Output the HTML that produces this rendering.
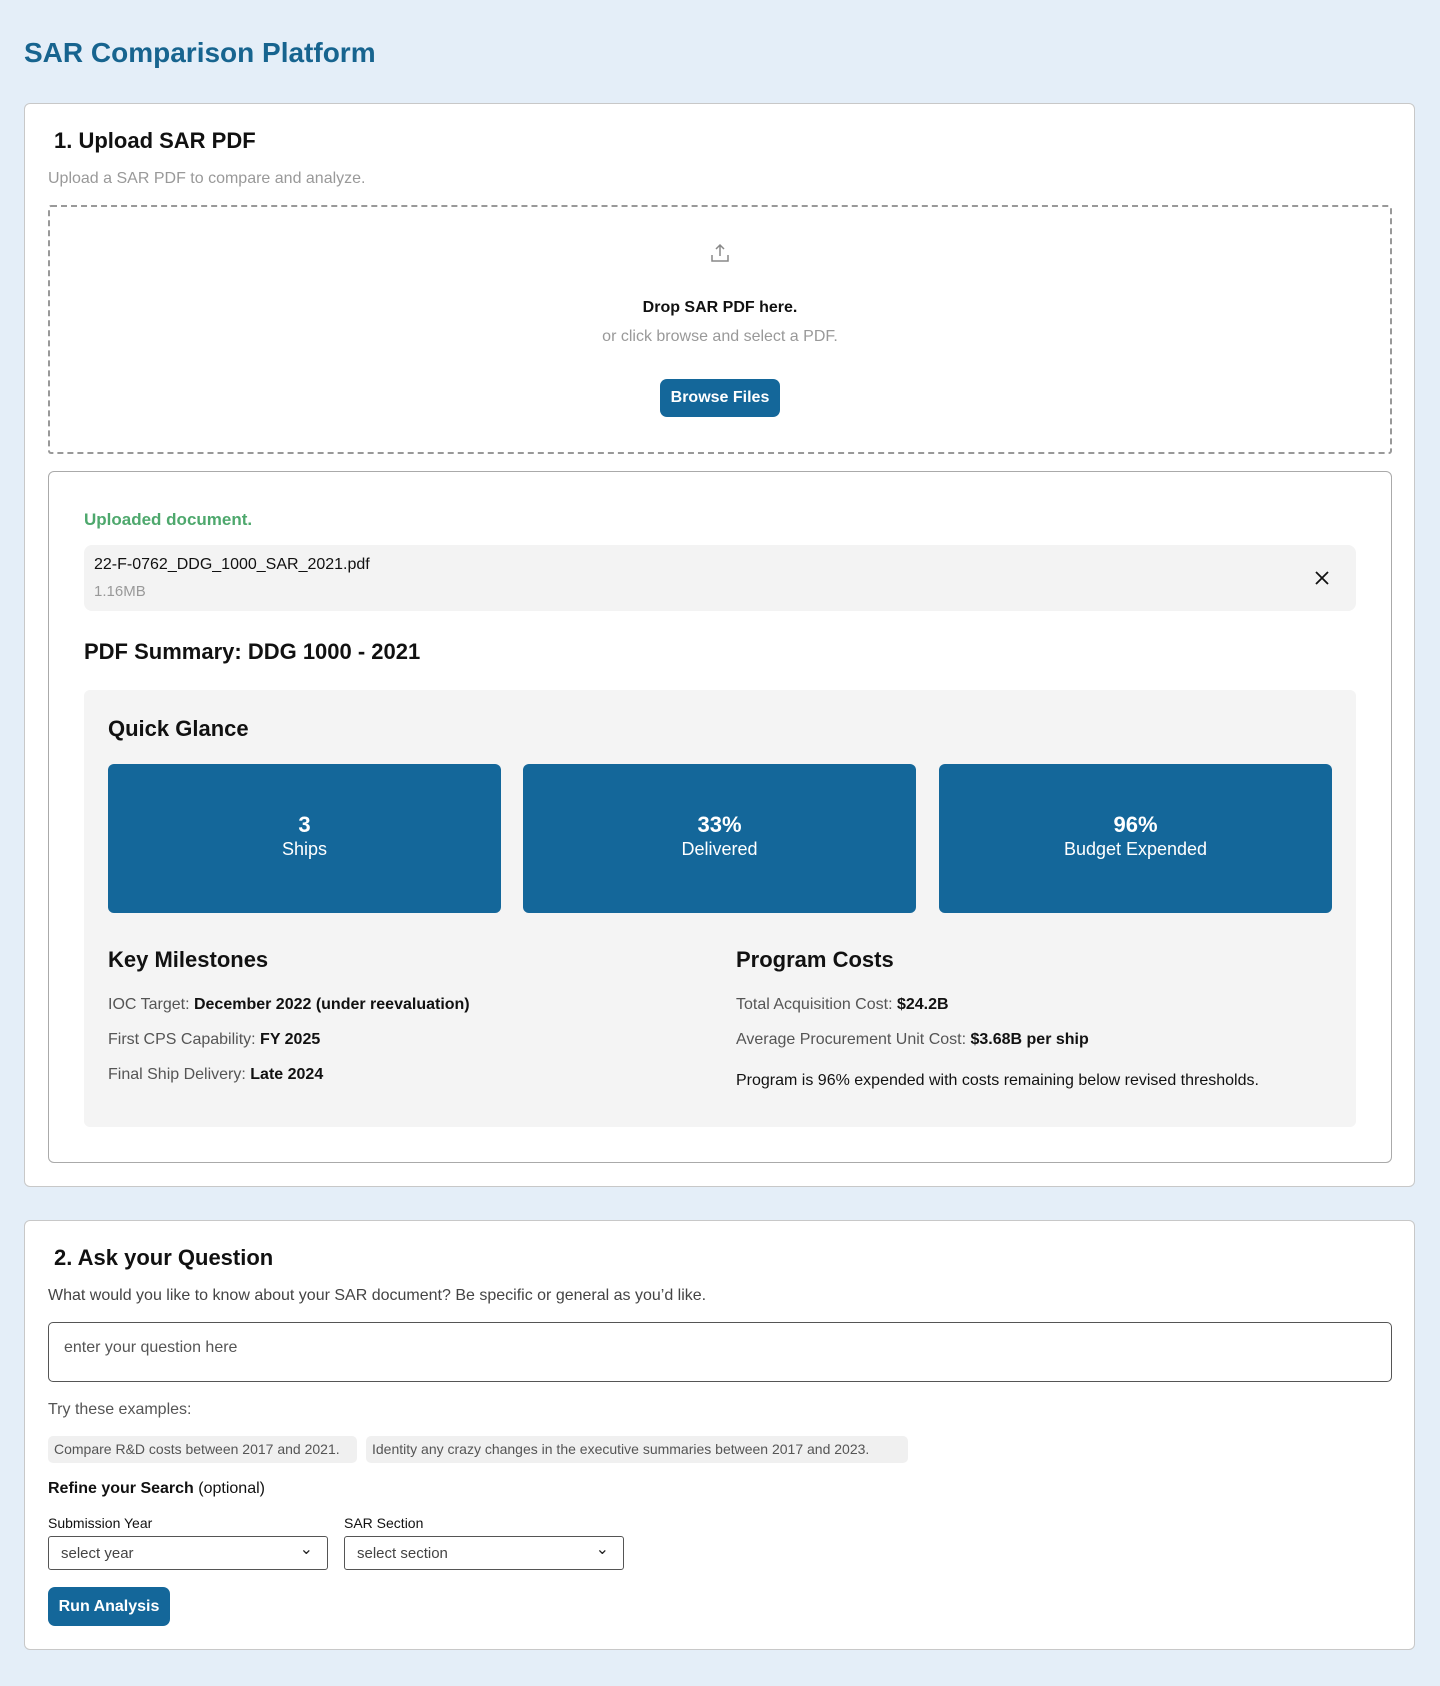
<!DOCTYPE html>
<html><head><meta charset="utf-8"><style>
*{box-sizing:border-box;margin:0;padding:0}
body{width:1440px;height:1686px;background:#e4eef8;font-family:"Liberation Sans",sans-serif;color:#111;position:relative;overflow:hidden}
.a{position:absolute}
h1{position:absolute;left:24px;top:37px;font-size:28px;color:#17648f;font-weight:bold}
.card{position:absolute;background:#fff;border:1px solid #c8c8c8;border-radius:6px}
.h2{position:absolute;font-size:22px;font-weight:bold}
.muted{color:#999}
.btn{position:absolute;background:#14679a;color:#fff;font-weight:bold;font-size:16px;border-radius:7px;display:flex;align-items:center;justify-content:center}
.tile{position:absolute;top:764px;height:149px;width:393px;background:#14679a;color:#fff;border-radius:6px;text-align:center;padding-top:48px;font-size:18px}
.tile b{display:block;font-size:22px;margin-bottom:1px}
.row{position:absolute;font-size:16px;color:#555}
.row b{color:#111}
.chip{position:absolute;top:1436px;height:27px;background:#f0f0f0;border-radius:5px;font-size:14px;color:#555;padding:5px 6px 0}
.sel{position:absolute;top:1536px;height:34px;width:280px;border:1px solid #555;border-radius:3px;font-size:15px;color:#444;padding:8px 12px}
.sel:after{content:"⌄";position:absolute;right:14px;top:2px;font-size:16px;color:#222}
</style></head><body>
<h1>SAR Comparison Platform</h1>

<div class="card" style="left:24px;top:103px;width:1391px;height:1084px"></div>
<div class="h2" style="left:54px;top:128px">1. Upload SAR PDF</div>
<div class="a muted" style="left:48px;top:170px;font-size:16px">Upload a SAR PDF to compare and analyze.</div>
<div class="a" style="left:48px;top:205px;width:1344px;height:249px;border:2px dashed #999;border-radius:3px"></div>
<svg class="a" style="left:709px;top:242px" width="22" height="22" viewBox="0 0 22 22" fill="none" stroke="#888" stroke-width="1.5"><path d="M11 3v11M7 7l4-4 4 4M3 13v6h16v-6"/></svg>
<div class="a" style="left:0;width:1440px;text-align:center;top:299px;font-size:16px;font-weight:bold">Drop SAR PDF here.</div>
<div class="a muted" style="left:0;width:1440px;text-align:center;top:328px;font-size:16px">or click browse and select a PDF.</div>
<div class="btn" style="left:660px;top:379px;width:120px;height:38px">Browse Files</div>

<div class="a" style="left:48px;top:471px;width:1344px;height:692px;border:1px solid #aaa;border-radius:6px"></div>
<div class="a" style="left:84px;top:510px;font-size:17px;font-weight:bold;color:#4ea86d">Uploaded document.</div>
<div class="a" style="left:84px;top:545px;width:1272px;height:66px;background:#f3f3f3;border-radius:8px"></div>
<div class="a" style="left:94px;top:556px;font-size:16px">22-F-0762_DDG_1000_SAR_2021.pdf</div>
<div class="a muted" style="left:94px;top:583px;font-size:15px">1.16MB</div>
<svg class="a" style="left:1314px;top:570px" width="16" height="16" viewBox="0 0 16 16" stroke="#111" stroke-width="1.8"><path d="M2 2l12 12M14 2L2 14"/></svg>
<div class="h2" style="left:84px;top:639px">PDF Summary: DDG 1000 - 2021</div>

<div class="a" style="left:84px;top:690px;width:1272px;height:437px;background:#f4f4f4;border-radius:6px"></div>
<div class="h2" style="left:108px;top:716px">Quick Glance</div>
<div class="tile" style="left:108px"><b>3</b>Ships</div>
<div class="tile" style="left:523px"><b>33%</b>Delivered</div>
<div class="tile" style="left:939px"><b>96%</b>Budget Expended</div>
<div class="h2" style="left:108px;top:947px">Key Milestones</div>
<div class="h2" style="left:736px;top:947px">Program Costs</div>
<div class="row" style="left:108px;top:996px">IOC Target: <b>December 2022 (under reevaluation)</b></div>
<div class="row" style="left:108px;top:1031px">First CPS Capability: <b>FY 2025</b></div>
<div class="row" style="left:108px;top:1066px">Final Ship Delivery: <b>Late 2024</b></div>
<div class="row" style="left:736px;top:996px">Total Acquisition Cost: <b>$24.2B</b></div>
<div class="row" style="left:736px;top:1031px">Average Procurement Unit Cost: <b>$3.68B per ship</b></div>
<div class="row" style="left:736px;top:1072px;color:#111">Program is 96% expended with costs remaining below revised thresholds.</div>

<div class="card" style="left:24px;top:1220px;width:1391px;height:430px"></div>
<div class="h2" style="left:54px;top:1245px">2. Ask your Question</div>
<div class="a" style="left:48px;top:1287px;font-size:16px;color:#444">What would you like to know about your SAR document? Be specific or general as you’d like.</div>
<div class="a" style="left:48px;top:1322px;width:1344px;height:60px;border:1px solid #555;border-radius:5px;font-size:16px;color:#555;padding:16px 15px">enter your question here</div>
<div class="a" style="left:48px;top:1401px;font-size:16px;color:#555">Try these examples:</div>
<div class="chip" style="left:48px;width:309px">Compare R&amp;D costs between 2017 and 2021.</div>
<div class="chip" style="left:366px;width:542px">Identity any crazy changes in the executive summaries between 2017 and 2023.</div>
<div class="a" style="left:48px;top:1480px;font-size:16px"><b>Refine your Search</b> (optional)</div>
<div class="a" style="left:48px;top:1515px;font-size:14px">Submission Year</div>
<div class="a" style="left:344px;top:1515px;font-size:14px">SAR Section</div>
<div class="sel" style="left:48px">select year</div>
<div class="sel" style="left:344px">select section</div>
<div class="btn" style="left:48px;top:1587px;width:122px;height:39px">Run Analysis</div>
</body></html>
